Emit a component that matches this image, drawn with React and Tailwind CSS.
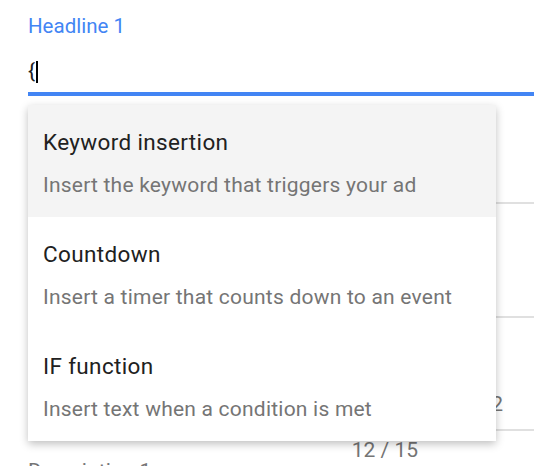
import React from 'react';

const opciones = [
  { titulo: 'Keyword insertion', desc: 'Insert the keyword that triggers your ad', activo: true },
  { titulo: 'Countdown', desc: 'Insert a timer that counts down to an event' },
  { titulo: 'IF function', desc: 'Insert text when a condition is met' },
];

const App = () => {
  return (
    <div className="relative w-[534px] h-[466px] overflow-hidden bg-white font-['Roboto',sans-serif]">
      {/* Formulario de fondo */}
      <div className="pl-[28px]">
        <div className="pt-[14px] text-[20.5px] leading-[24px] text-[#4285f4]">Headline 1</div>
        <div className="mt-[14px] h-[44px] flex items-center border-b-4 border-[#4285f4] text-[21px] text-[#212121]">
          <span>{'{'}</span>
          <span className="w-[2px] h-[22px] bg-black ml-px" />
        </div>

        <div className="h-[108px] border-b-2 border-[#e0e0e0]" />
        <div className="h-[114px] border-b-2 border-[#e0e0e0]" />
        <div className="h-[113px] border-b-2 border-[#e0e0e0] flex items-end justify-end pr-[31px] pb-[13px] text-[21px] leading-[24px] text-[#757575]">
          2
        </div>

        <div className="mt-[7px] h-[21px] w-[390px] text-right text-[21px] leading-[24px] text-[#757575]">12 / 15</div>
        <div className="text-[21px] leading-[24px] text-[#757575]">Description 1</div>
      </div>

      {/* Menú de inserción */}
      <div className="absolute top-[105px] left-[28px] w-[468px] bg-white rounded-[2px] shadow-[0_3px_8px_rgba(0,0,0,0.25)]">
        {opciones.map(o => (
          <div key={o.titulo} className={`h-[112px] px-[15px] pt-[23px] ${o.activo ? 'bg-[#f4f4f4]' : 'bg-white'}`}>
            <div className="text-[22.5px] leading-[28px] tracking-[0.35px] text-[#212121]">{o.titulo}</div>
            <div className="mt-[17px] text-[21px] leading-[24px] tracking-[0.22px] text-[#757575]">{o.desc}</div>
          </div>
        ))}
      </div>
    </div>
  );
};

export default App;
